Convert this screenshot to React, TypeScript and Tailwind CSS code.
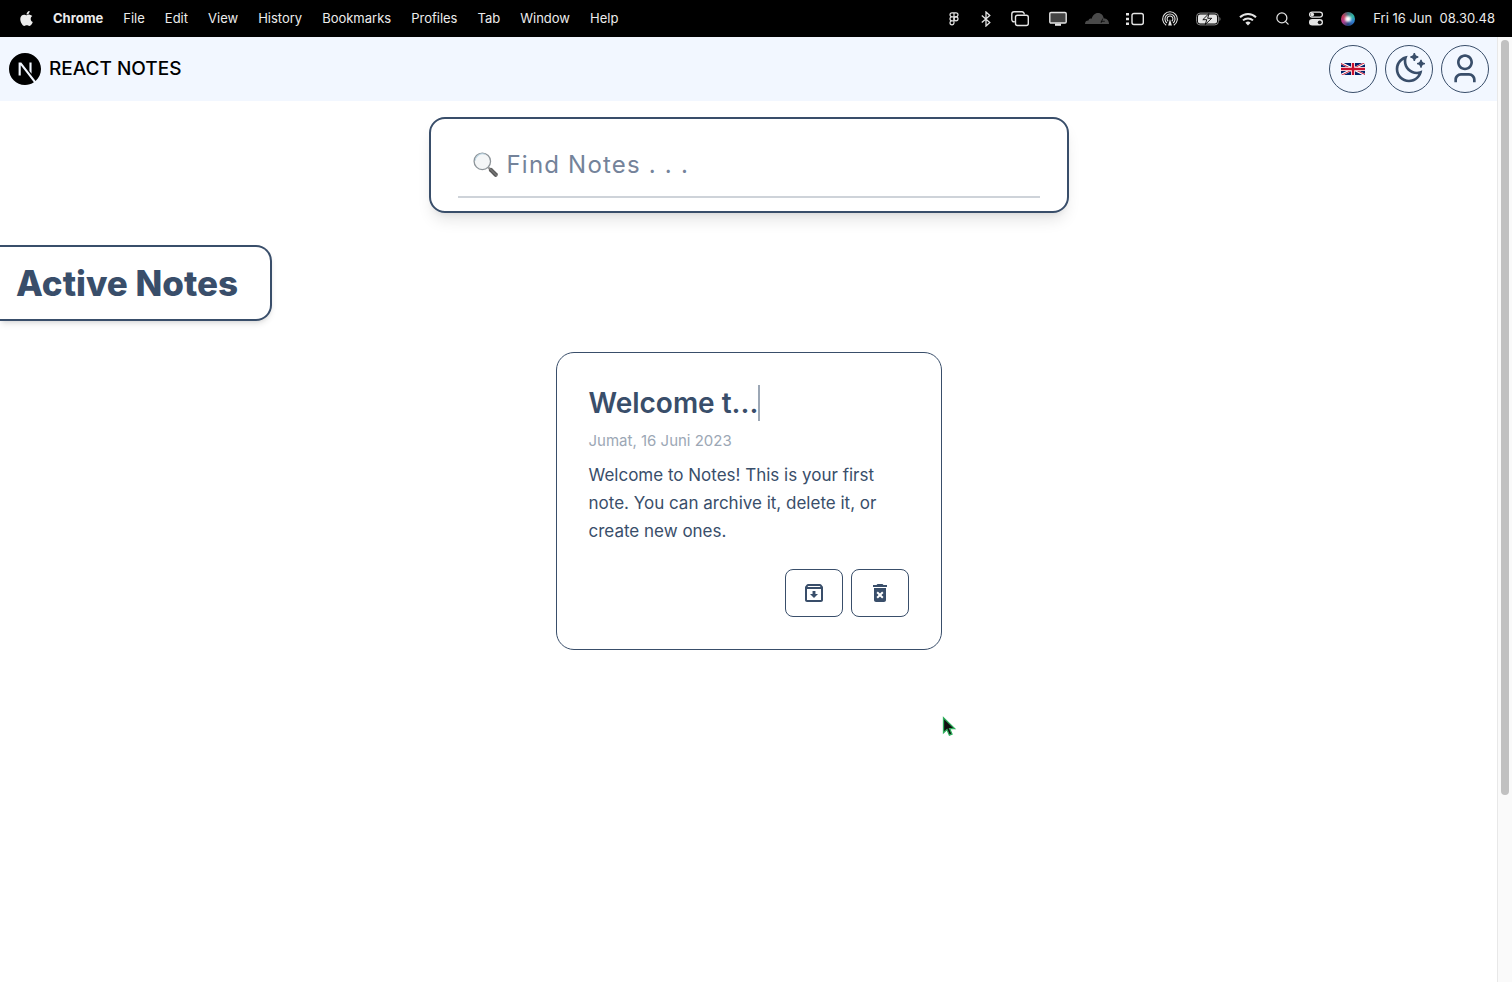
import React from "react";
import { RiMoonClearLine, RiUser3Line } from "react-icons/ri";
import { MdOutlineArchive, MdDeleteForever } from "react-icons/md";
import { SiNextdotjs } from "react-icons/si";
import { FaApple } from "react-icons/fa";
import { FiSearch } from "react-icons/fi";

const menus = ["File", "Edit", "View", "History", "Bookmarks", "Profiles", "Tab", "Window", "Help"];

function StatusIcons() {
  return (
    <div className="flex items-center text-[#e4e4e4]">
      <svg className="mr-[22px] h-[14px] w-[10px]" viewBox="0 0 10 14" fill="none" stroke="currentColor" strokeWidth="1.2">
        <path d="M5 .8H3a1.9 1.9 0 0 0 0 4h2zM5 .8h2a1.9 1.9 0 0 1 0 4H5zM5 4.8H3a1.9 1.9 0 0 0 0 4h2zM5 8.8H3a2 2 0 1 0 2 2z" />
        <circle cx="7" cy="6.8" r="2" />
      </svg>
      <svg className="mr-5 h-4 w-[10px]" viewBox="0 0 10 16" fill="none" stroke="currentColor" strokeWidth="1.3">
        <path d="M.8 4.500l8 7L5 15V1l3.800 3.500-8 7" />
      </svg>
      <svg className="mr-5 h-4 w-[18px]" viewBox="0 0 18 16" fill="none" stroke="currentColor" strokeWidth="1.4">
        <path d="M3.800 10.800H3A2.200 2.200 0 0 1 .8 8.600V3A2.200 2.200 0 0 1 3 .8h8A2.200 2.200 0 0 1 13.200 3v.6" />
        <rect x="4.500" y="4.200" width="12.800" height="10.300" rx="2" />
      </svg>
      <svg className="mr-[18px] h-4 w-[18px]" viewBox="0 0 18 16">
        <rect x=".8" y="1.500" width="16.400" height="10.500" rx="1.200" fill="#444" stroke="currentColor" strokeWidth="1.400" />
        <path d="M6 12.500h6v2.300H6z" fill="currentColor" />
      </svg>
      <svg className="mr-[17px] h-[13px] w-6" viewBox="0 0 24 13" fill="#4a4a4a">
        <path d="M0 12c0-2.300 1.500-3.500 3.500-3.400.2-1.700 1.700-2.500 3.200-1.800C7.500 3.500 9.800 1 13 1c3.300 0 5.300 2.300 5.700 5.200C21.900 6.300 24 8.700 24 12z" />
        <path d="M15.800 9.300h4M17.800 6.500l-1.800 4.500" stroke="#000" strokeWidth=".7" />
      </svg>
      <svg className="mr-[18px] h-[14px] w-[18px]" viewBox="0 0 18 14">
        <rect x="6" y="1.500" width="11.300" height="11" rx="2" fill="none" stroke="currentColor" strokeWidth="1.400" />
        <path d="M0 1h3v2.500H0zM0 5.700h3v2.500H0zM0 10.400h3v2.500H0z" fill="currentColor" />
      </svg>
      <svg className="mr-[18px] h-4 w-4" viewBox="0 0 16 16" fill="none" stroke="currentColor" strokeWidth="1.100">
        <path d="M4.200 14.300a7.300 7.300 0 1 1 7.600 0M5 12a5 5 0 1 1 6 0M6.200 10.200a2.900 2.900 0 1 1 3.600 0" />
        <path d="M8 8l1.900 6.500H6.100z" fill="currentColor" stroke="none" />
      </svg>
      <svg className="mr-[18px] h-[14px] w-[25px]" viewBox="0 0 25 14">
        <rect x=".6" y="1.100" width="21.800" height="11.800" rx="3.500" fill="none" stroke="#888" />
        <rect x="2" y="2.500" width="19" height="9" rx="2" fill="currentColor" />
        <path d="M23.500 5v4c1.300-.5 1.300-3.500 0-4z" fill="#888" />
        <path d="M13 1.500 6.800 7.700h4l-1.600 4.800L15.700 6.300h-4z" fill="currentColor" stroke="#000" strokeWidth=".9" />
      </svg>
      <svg className="mr-[18px] h-[14px] w-[18px]" viewBox="0 0 18 14" fill="none" stroke="currentColor" strokeWidth="2">
        <path d="M1 5.200a11.500 11.500 0 0 1 16 0M4 8.400a7.200 7.200 0 0 1 10 0" />
        <path d="M9 13.500 6.400 10.800a3.700 3.700 0 0 1 5.200 0z" fill="currentColor" stroke="none" />
      </svg>
      <FiSearch className="mr-[18px] h-[15px] w-[15px]" />
      <svg className="mr-[17px] h-[15px] w-4" viewBox="0 0 16 15">
        <rect x="1.600" y="1.100" width="12.800" height="5" rx="2.500" fill="none" stroke="currentColor" strokeWidth="1.300" />
        <circle cx="4.300" cy="3.600" r="1.800" fill="currentColor" />
        <rect x="1" y="8" width="14" height="6.600" rx="3.300" fill="currentColor" />
        <circle cx="11.700" cy="11.300" r="1.900" fill="#111" />
      </svg>
      <span className="mr-4 flex h-[14px] w-[14px] items-center justify-center rounded-full bg-[conic-gradient(#45707c,#2bb5a4,#2f7bd0,#24407a,#b03a88,#c03a5a,#45707c)]">
        <span className="h-[6px] w-[6px] rounded-full bg-white blur-[1px]" />
      </span>
    </div>
  );
}

function MenuBar() {
  return (
    <header className="flex h-[37px] items-center justify-between bg-black pr-[17px] pl-5 text-[13px] text-[#ececec]">
      <nav aria-label="Menu bar" className="flex items-center gap-5">
        <FaApple className="h-[17px] w-[13px]" />
        <strong className="font-bold">Chrome</strong>
        {menus.map((m) => (
          <span key={m}>{m}</span>
        ))}
      </nav>
      <div className="flex items-center">
        <StatusIcons />
        <time className="pl-[2px] whitespace-pre">Fri 16 Jun  08.30.48</time>
      </div>
    </header>
  );
}

function UnionJack() {
  return (
    <svg className="h-3 w-6" viewBox="0 0 60 30" preserveAspectRatio="none">
      <clipPath id="quarters">
        <path d="M30 15h30v15zv15H0zH0V0zV0h30z" />
      </clipPath>
      <path d="M0 0v30h60V0z" fill="#012169" />
      <path d="M0 0l60 30m0-30L0 30" stroke="#fff" strokeWidth="6" />
      <path d="M0 0l60 30m0-30L0 30" clipPath="url(#quarters)" stroke="#c8102e" strokeWidth="4" />
      <path d="M30 0v30M0 15h60" stroke="#fff" strokeWidth="10" />
      <path d="M30 0v30M0 15h60" stroke="#c8102e" strokeWidth="6" />
    </svg>
  );
}

function RoundButton({ label, children }: { label: string; children: React.ReactNode }) {
  return (
    <button aria-label={label} className="flex h-12 w-12 items-center justify-center rounded-full border border-[#394e6a]">
      {children}
    </button>
  );
}

function NavBar() {
  return (
    <div className="flex h-16 items-center justify-between bg-[#f2f7ff] pr-2 pl-[9px]">
      <a href="#" className="flex items-center gap-2 text-[19px] font-medium text-black">
        <SiNextdotjs className="h-8 w-8" />
        REACT NOTES
      </a>
      <div className="flex gap-2">
        <RoundButton label="Language">
          <UnionJack />
        </RoundButton>
        <RoundButton label="Dark mode">
          <RiMoonClearLine className="h-8 w-8" />
        </RoundButton>
        <RoundButton label="Account">
          <RiUser3Line className="h-8 w-8" />
        </RoundButton>
      </div>
    </div>
  );
}

function Magnifier() {
  return (
    <svg className="h-[26px] w-[26px]" viewBox="0 0 24 24">
      <defs>
        <linearGradient id="handle" x1="0" y1="1" x2="1" y2="0">
          <stop offset="0" stopColor="#222" />
          <stop offset=".5" stopColor="#777" />
          <stop offset="1" stopColor="#333" />
        </linearGradient>
      </defs>
      <path d="M14 14l3 3" stroke="#999" strokeWidth="2" />
      <path d="M16.500 16.500l4.500 4.500" stroke="url(#handle)" strokeWidth="3.800" strokeLinecap="round" />
      <circle cx="8.600" cy="8.600" r="7.600" fill="#f4f6f7" stroke="#8d9499" strokeWidth="1.200" />
      <path d="M2 8a7 7 0 0 1 9-6" fill="none" stroke="#b9d4e2" strokeWidth="1" />
    </svg>
  );
}

function SearchBox() {
  return (
    <div className="mx-auto mt-4 h-24 w-full max-w-[640px] rounded-2xl border-2 border-[#394e6a] px-[27px] pt-3 shadow-lg">
      <div className="flex h-[67px] items-center gap-2 border-b-2 border-[#ced3d9] px-[15px] pt-[3px]">
        <Magnifier />
        <input
          type="text"
          aria-label="Find notes"
          placeholder="Find Notes . . ."
          className="min-w-0 flex-1 bg-transparent text-[24px] tracking-wider outline-none placeholder:text-[#74839a]"
        />
      </div>
    </div>
  );
}

function CardButton({ label, children }: { label: string; children: React.ReactNode }) {
  return (
    <button aria-label={label} className="flex h-12 w-[58px] items-center justify-center rounded-lg border border-[#394e6a]">
      {children}
    </button>
  );
}

function NoteCard() {
  return (
    <article className="mx-auto mt-[31px] w-[386px] rounded-[18px] border border-[#394e6a] p-8">
      <h2 className="flex text-[28px] leading-9 font-semibold">
        <span className="border-r-2 border-[#9ca7b5]">Welcome t...</span>
      </h2>
      <p className="mt-2 text-[15px] leading-6 text-[#9ca7b5]">Jumat, 16 Juni 2023</p>
      <p className="mt-2 text-[17px] leading-7">
        Welcome to Notes! This is your first note. You can archive it, delete it, or create new ones.
      </p>
      <div className="mt-6 flex justify-end gap-2">
        <CardButton label="Archive">
          <MdOutlineArchive className="h-6 w-6" />
        </CardButton>
        <CardButton label="Delete">
          <MdDeleteForever className="h-6 w-6" />
        </CardButton>
      </div>
    </article>
  );
}

export default function App() {
  return (
    <div className="flex min-h-screen flex-col bg-white font-['Inter','Liberation_Sans',sans-serif] text-[#394e6a]">
      <MenuBar />
      <div className="flex flex-1">
        <main className="min-w-0 flex-1">
          <NavBar />
          <SearchBox />
          <h1 className="mt-8 w-fit rounded-r-2xl border-2 border-l-0 border-[#394e6a] py-4 pr-8 pl-4 text-[35px] leading-10 font-extrabold shadow-md">
            Active Notes
          </h1>
          <NoteCard />
        </main>
        <div className="flex w-[15px] flex-col items-center border-l border-[#e8e8e8] bg-[#fafafa] pt-[3px]">
          <div className="h-[755px] w-2 rounded-full bg-[#c1c1c1]" />
        </div>
      </div>
      <svg className="absolute top-[716px] left-[942px] h-[22px] w-4" viewBox="0 0 16 22">
        <path d="M1.500 1.800v15l3.500-3.300 2.400 5.700 2.600-1.100-2.400-5.500h5z" fill="#111" stroke="#2fae5c" strokeWidth="1.300" />
      </svg>
    </div>
  );
}
